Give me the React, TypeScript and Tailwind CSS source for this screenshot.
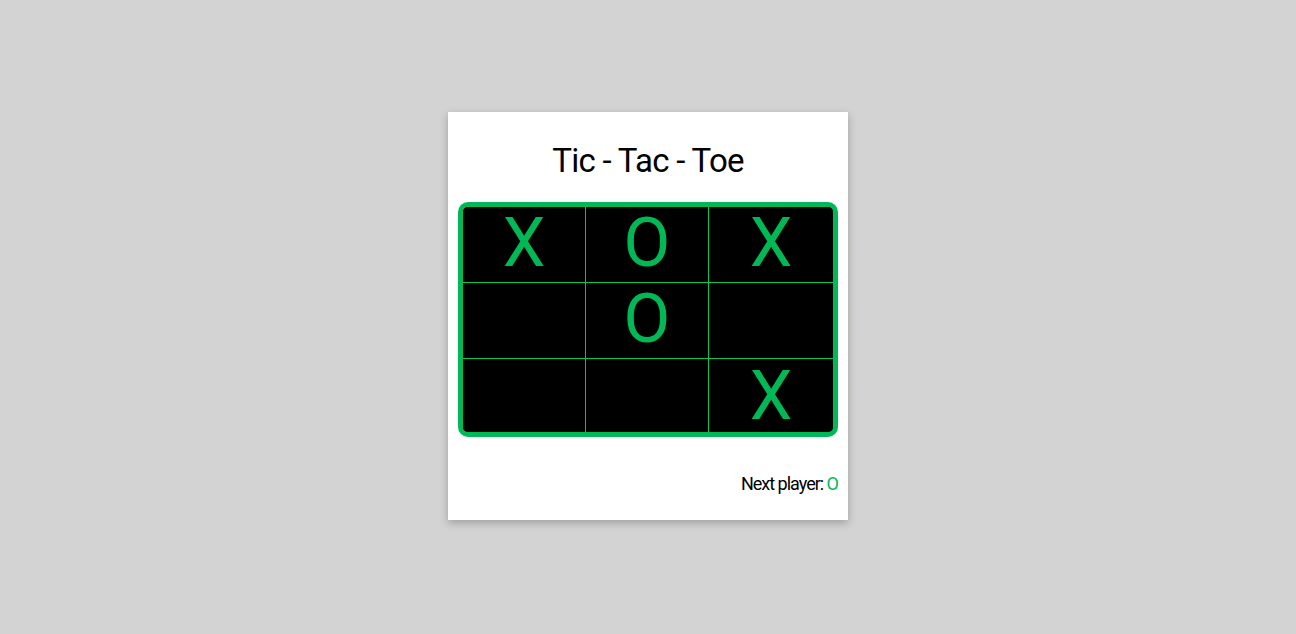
const board: string[] = ['X', 'O', 'X', '', 'O', '', '', '', 'X'];

function Square({ value }: { value: string }) {
  return (
    <div className="flex items-center justify-center overflow-visible bg-black pb-[3px] text-[68px] leading-[75px] text-[#00b956]">
      {value}
    </div>
  );
}

export default function App() {
  return (
    <div
      className="flex min-h-screen items-start justify-center bg-[#d3d3d3] pt-[112px]"
      style={{ fontFamily: 'Roboto, "Liberation Sans", sans-serif' }}
    >
      <div className="flex h-[408px] w-[400px] flex-col bg-white px-[10px] shadow-[0_3px_8px_rgba(0,0,0,0.25)]">
        <h1 className="mt-[29px] text-center text-[33px] leading-[40px] tracking-[-0.7px] text-black">
          Tic - Tac - Toe
        </h1>
        <div className="mt-[21px] h-[235px] rounded-[10px] border-[5px] border-[#00b956] bg-black">
          <div className="grid h-full grid-cols-[122px_1px_122px_1px_1fr] grid-rows-[75px_1px_75px_1px_1fr] overflow-hidden rounded-[5px]">
            {[0, 1, 2].map((r) => (
              <div key={r} className="contents">
                {[0, 1, 2].map((c) => (
                  <div key={c} className="contents">
                    <Square value={board[r * 3 + c]} />
                    {c < 2 && <div className="bg-[#00c45a]" />}
                  </div>
                ))}
                {r < 2 && <div className="col-span-5 bg-[#00c45a]" />}
              </div>
            ))}
          </div>
        </div>
        <div className="mt-[36px] text-right text-[18px] leading-[22px] tracking-[-1px] text-black">
          Next player: <span className="text-[#00b956]">O</span>
        </div>
      </div>
    </div>
  );
}
